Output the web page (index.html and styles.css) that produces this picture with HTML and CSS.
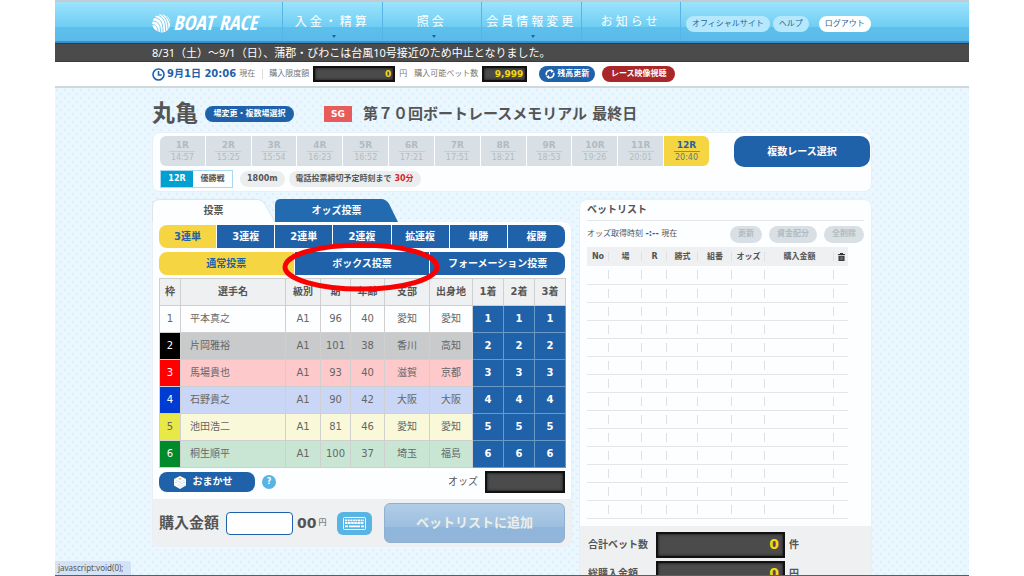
FILE: index.html
```html
<!DOCTYPE html>
<html lang="ja">
<head>
<meta charset="utf-8">
<meta name="viewport" content="width=device-width, initial-scale=1">
<title>BOAT RACE 投票</title>
<link rel="stylesheet" href="styles.css">
</head>
<body>
<div class="frame">
  <header class="header">
    <div class="wrap header-row">
      <a class="logo" href="#">
        <svg width="19" height="19" viewBox="0 0 19 19" aria-hidden="true">
          <path d="M1 6C3 1 8-1 13 1c5 2 6 7 5 11-2 6-8 8-13 5C1 15-1 11 1 6z" fill="#fff"/>
          <g fill="none" stroke="#6cc9f0" stroke-width=".9">
            <path d="M2 3.500C9 4 11 9 11 18"/><path d="M5 1C12 3 14 9 13.500 17"/><path d="M9 .3c5 3 7 8 7 14.700"/><path d="M0 7c6 0 9 4 8.500 11.500"/><path d="M0 10.500c4 0 6 3 6 7"/><path d="M12.500.5c3 3 5 6 6 10"/>
          </g>
        </svg>
        <span>BOAT RACE</span>
      </a>
      <nav class="nav">
        <a class="has-menu" href="#">入金・精算</a>
        <a class="has-menu" href="#">照会</a>
        <a class="has-menu" href="#">会員情報変更</a>
        <a href="#">お知らせ</a>
      </nav>
      <div class="links">
        <a class="chip" href="#">オフィシャルサイト</a>
        <a class="chip" href="#">ヘルプ</a>
        <button class="chip chip-out" type="button">ログアウト</button>
      </div>
    </div>
  </header>
  <div class="notice"><p class="wrap">8/31（土）～9/1（日）、蒲郡・びわこは台風10号接近のため中止となりました。</p></div>
  <div class="status">
    <div class="wrap status-row">
      <svg class="clock" width="13" height="13" viewBox="0 0 13 13" aria-hidden="true"><g fill="none" stroke="#1f62a9" stroke-width="1.600"><circle cx="6.500" cy="6.500" r="5.500"/><path d="M6.500 3v4h3.200"/></g></svg>
      <strong class="now">9月1日 20:06</strong><span class="now-tail">現在</span>
      <span class="limit-label">購入限度額</span><output class="lcd lcd-limit">0</output>
      <span class="yen">円</span><span class="count-label">購入可能ベット数</span><output class="lcd lcd-count">9,999</output>
      <button class="pill refresh" type="button"><svg width="10" height="10" viewBox="0 0 10 10" aria-hidden="true"><g fill="none" stroke="#fff" stroke-width="1.600"><path d="M1.500 6.200A3.600 3.600 0 0 1 6.800 1.900M8.500 3.800A3.600 3.600 0 0 1 3.200 8.100"/></g><path d="M6 0l3 2.500-3 1.300zM4 10L1 7.500l3-1.300z" fill="#fff"/></svg>残高更新</button>
      <button class="pill video" type="button">レース映像視聴</button>
    </div>
  </div>

  <main class="wrap main">
    <div class="title-row">
      <h1>丸亀</h1>
      <button class="pill venue" type="button">場変更・複数場選択</button>
      <span class="grade">SG</span>
      <h2>第７０回ボートレースメモリアル 最終日</h2>
    </div>

    <section class="card races">
      <div class="race-row">
        <div class="race-list">
          <button type="button" disabled><b>1R</b><span>14:57</span></button>
          <button type="button" disabled><b>2R</b><span>15:25</span></button>
          <button type="button" disabled><b>3R</b><span>15:54</span></button>
          <button type="button" disabled><b>4R</b><span>16:23</span></button>
          <button type="button" disabled><b>5R</b><span>16:52</span></button>
          <button type="button" disabled><b>6R</b><span>17:21</span></button>
          <button type="button" disabled><b>7R</b><span>17:51</span></button>
          <button type="button" disabled><b>8R</b><span>18:21</span></button>
          <button type="button" disabled><b>9R</b><span>18:53</span></button>
          <button type="button" disabled><b>10R</b><span>19:26</span></button>
          <button type="button" disabled><b>11R</b><span>20:01</span></button>
          <button type="button" class="current"><b>12R</b><span>20:40</span></button>
        </div>
        <button class="multi" type="button">複数レース選択</button>
      </div>
      <div class="race-info">
        <div class="race-name"><b>12R</b><span>優勝戦</span></div>
        <span class="tag">1800m</span>
        <span class="tag">電話投票締切予定時刻まで <em>30分</em></span>
      </div>
    </section>

    <div class="columns">
      <section class="vote">
        <div class="tabs">
          <button class="tab-on" type="button"><svg viewBox="0 0 123 24" preserveAspectRatio="none" aria-hidden="true"><path d="M.5 24V8q0-7.500 7.500-7.500H106q4 0 7 5L123 24" fill="#fdfeff" stroke="#dde3e6"/></svg><span>投票</span></button>
          <button class="tab-off" type="button"><svg viewBox="0 0 123 24" preserveAspectRatio="none" aria-hidden="true"><path d="M0 24V6q0-6 6-6H106q5 0 8 5l9 19z" fill="#236bb1"/></svg><span>オッズ投票</span></button>
        </div>
        <div class="vote-body">
          <div class="segment types">
            <button class="on" type="button">3連単</button><button type="button">3連複</button><button type="button">2連単</button><button type="button">2連複</button><button type="button">拡連複</button><button type="button">単勝</button><button type="button">複勝</button>
          </div>
          <div class="segment methods">
            <button class="on" type="button">通常投票</button><button type="button">ボックス投票</button><button type="button">フォーメーション投票</button>
          </div>
          <table class="entries">
            <colgroup><col class="c-no"><col class="c-name"><col class="c-class"><col class="c-term"><col class="c-age"><col class="c-branch"><col class="c-home"><col class="c-pick"><col class="c-pick"><col class="c-pick"></colgroup>
            <thead><tr><th>枠</th><th>選手名</th><th>級別</th><th>期</th><th>年齢</th><th>支部</th><th>出身地</th><th>1着</th><th>2着</th><th>3着</th></tr></thead>
            <tbody>
              <tr class="boat1"><td>1</td><td>平本真之</td><td>A1</td><td>96</td><td>40</td><td>愛知</td><td>愛知</td><td><button type="button">1</button></td><td><button type="button">1</button></td><td><button type="button">1</button></td></tr>
              <tr class="boat2"><td>2</td><td>片岡雅裕</td><td>A1</td><td>101</td><td>38</td><td>香川</td><td>高知</td><td><button type="button">2</button></td><td><button type="button">2</button></td><td><button type="button">2</button></td></tr>
              <tr class="boat3"><td>3</td><td>馬場貴也</td><td>A1</td><td>93</td><td>40</td><td>滋賀</td><td>京都</td><td><button type="button">3</button></td><td><button type="button">3</button></td><td><button type="button">3</button></td></tr>
              <tr class="boat4"><td>4</td><td>石野貴之</td><td>A1</td><td>90</td><td>42</td><td>大阪</td><td>大阪</td><td><button type="button">4</button></td><td><button type="button">4</button></td><td><button type="button">4</button></td></tr>
              <tr class="boat5"><td>5</td><td>池田浩二</td><td>A1</td><td>81</td><td>46</td><td>愛知</td><td>愛知</td><td><button type="button">5</button></td><td><button type="button">5</button></td><td><button type="button">5</button></td></tr>
              <tr class="boat6"><td>6</td><td>桐生順平</td><td>A1</td><td>100</td><td>37</td><td>埼玉</td><td>福島</td><td><button type="button">6</button></td><td><button type="button">6</button></td><td><button type="button">6</button></td></tr>
            </tbody>
          </table>
          <div class="auto-row">
            <button class="auto" type="button"><svg width="12" height="13" viewBox="0 0 12 13" aria-hidden="true"><path d="M6 0l6 3v6.500L6 13 0 9.500V3z" fill="#fff"/><path d="M.5 3.500L6 6l5.500-2.500M6 6v6.500" fill="none" stroke="#c9dbea" stroke-width=".7"/><ellipse cx="6" cy="2.800" rx="1.500" ry=".9" fill="#e8b93c"/><g fill="#8fb3d6"><circle cx="2" cy="6.500" r=".6"/><circle cx="4" cy="9" r=".6"/><circle cx="8" cy="7.500" r=".6"/><circle cx="10" cy="6.500" r=".6"/><circle cx="8" cy="10" r=".6"/><circle cx="10" cy="9" r=".6"/></g></svg>おまかせ</button>
            <button class="help" type="button">?</button>
            <span class="odds-label">オッズ</span><output class="lcd lcd-odds" aria-label="オッズ"></output>
          </div>
        </div>
        <div class="vote-foot">
          <label for="amount">購入金額</label>
          <input id="amount" type="text">
          <b class="zeros">00</b><span class="unit">円</span>
          <button class="keys" type="button" aria-label="キーボード"><svg width="23" height="13" viewBox="0 0 23 13" aria-hidden="true"><rect x=".5" y=".5" width="22" height="12" rx="1" fill="#58b4e2" stroke="#fff"/><g stroke="#fff" stroke-width="1.800" fill="none"><path d="M2 3.300h19" stroke-dasharray="2 .6"/><path d="M2 6h19" stroke-dasharray="2.500 .6"/><path d="M2 9.300h3M6 9.300h11M18 9.300h3"/></g></svg></button>
          <button class="add" type="button">ベットリストに追加</button>
        </div>
        <svg class="marker" viewBox="0 0 158 50" aria-hidden="true"><ellipse cx="79" cy="25" rx="76" ry="22" fill="none" stroke="#fb0000" stroke-width="5"/></svg>
      </section>

      <section class="bets">
        <div class="bets-body">
          <h3>ベットリスト</h3>
          <div class="bets-tools">
            <span class="odds-time">オッズ取得時刻 <b>-:--</b> 現在</span>
            <button type="button" disabled>更新</button>
            <button type="button" disabled>資金配分</button>
            <button type="button" disabled>全削除</button>
          </div>
          <table class="slips">
            <colgroup><col class="s-no"><col class="s-venue"><col class="s-race"><col class="s-type"><col class="s-combo"><col class="s-odds"><col class="s-amount"><col class="s-del"></colgroup>
            <thead><tr><th>No</th><th>場</th><th>R</th><th>勝式</th><th>組番</th><th>オッズ</th><th>購入金額</th><th><svg width="7" height="8" viewBox="0 0 7 8" aria-label="削除"><path d="M0 1h2V0h3v1h2v1H0zM.5 2.700h6V8h-6z" fill="#333"/><path d="M2.200 3.500v3.700M3.500 3.500v3.700M4.800 3.500v3.700" stroke="#aaa" stroke-width=".5"/></svg></th></tr></thead>
            <tbody>
              <tr><td></td><td></td><td></td><td></td><td></td><td></td><td></td><td></td></tr>
              <tr><td></td><td></td><td></td><td></td><td></td><td></td><td></td><td></td></tr>
              <tr><td></td><td></td><td></td><td></td><td></td><td></td><td></td><td></td></tr>
              <tr><td></td><td></td><td></td><td></td><td></td><td></td><td></td><td></td></tr>
              <tr><td></td><td></td><td></td><td></td><td></td><td></td><td></td><td></td></tr>
              <tr><td></td><td></td><td></td><td></td><td></td><td></td><td></td><td></td></tr>
              <tr><td></td><td></td><td></td><td></td><td></td><td></td><td></td><td></td></tr>
              <tr><td></td><td></td><td></td><td></td><td></td><td></td><td></td><td></td></tr>
              <tr><td></td><td></td><td></td><td></td><td></td><td></td><td></td><td></td></tr>
              <tr><td></td><td></td><td></td><td></td><td></td><td></td><td></td><td></td></tr>
              <tr><td></td><td></td><td></td><td></td><td></td><td></td><td></td><td></td></tr>
              <tr><td></td><td></td><td></td><td></td><td></td><td></td><td></td><td></td></tr>
              <tr><td></td><td></td><td></td><td></td><td></td><td></td><td></td><td></td></tr>
              <tr><td></td><td></td><td></td><td></td><td></td><td></td><td></td><td></td></tr>
            </tbody>
          </table>
        </div>
        <div class="totals">
          <span>合計ベット数</span><output class="lcd lcd-total">0</output><span>件</span>
          <span>総購入金額</span><output class="lcd lcd-total">0</output><span>円</span>
        </div>
      </section>
    </div>
  </main>
  <div class="hint">javascript:void(0);</div>
</div>
</body>
</html>
```
FILE: styles.css
```css
* { box-sizing: border-box; }
body, h1, h2, h3, p { margin: 0; }
body {
  font-family: "DejaVu Sans", "Noto Sans CJK JP", sans-serif;
  font-size: 10px;
  line-height: 1.2;
  color: #555;
  background: #fff;
}
button, input { font: inherit; color: inherit; }
button { border: 0; padding: 0; margin: 0; background: none; cursor: pointer; white-space: nowrap; }
a { color: inherit; text-decoration: none; }
svg { display: block; flex: none; }
.frame {
  position: relative;
  height: 100vh;
  margin: 0 55px;
  overflow: hidden;
  border-bottom: 1px solid #2c6b9e;
  background-color: #eaf7ff;
  background-image:
    radial-gradient(circle at 2px 2px, #d9effb 1px, transparent 1px),
    radial-gradient(circle at 6px 6px, #d9effb 1px, transparent 1px);
  background-size: 8px 8px;
}
.wrap { width: 100%; max-width: 720px; margin: 0 auto; }

.header {
  border-top: 2px solid #c3cbd0;
  border-bottom: 2px solid #3590cf;
  background: linear-gradient(#9ce3fc, #6fcdf3 64%, #5dc0ec 65%, #5bb9e8);
}
.header-row { display: flex; height: 39px; }
.logo { flex: none; display: flex; align-items: center; gap: 2px; width: 130px; padding-top: 3px; color: #fff; font: italic bold 20px/20px "Liberation Sans Narrow", "Open Sans Condensed", "Liberation Sans", sans-serif; white-space: nowrap; }
.nav { flex: none; display: flex; width: 399px; border-left: 1px solid #58b3e6; }
.nav a {
  position: relative;
  flex: 1;
  display: flex;
  align-items: center;
  justify-content: center;
  padding-top: 2px;
  border-right: 1px solid #58b3e6;
  color: #fff;
  font-size: 12px;
  letter-spacing: 3px;
}
.has-menu::after { content: ""; position: absolute; bottom: 3px; left: 50%; border: 2px solid transparent; border-top: 3px solid #1f62a9; border-bottom: 0; }
.links { display: flex; align-items: center; gap: 3px; padding: 4px 0 0 5px; }
.chip { height: 16px; padding: 0 6px; border-radius: 8px; background: #b5e8fc; color: #2a6496; font-size: 8px; line-height: 16px; white-space: nowrap; }
.chip-out { margin-left: 7px; background: #fff; }

.notice { border-top: 1px solid #3a3a3a; border-bottom: 1px solid #3a3a3a; background: #4b4b4b; color: #fff; font: 11px/17px "Noto Sans", "Noto Sans CJK JP", sans-serif; }
.status { border-bottom: 2px solid #cfd9dc; background: #fff; }
.status-row { display: flex; align-items: center; height: 24px; font-size: 8px; color: #777; white-space: nowrap; }
.now { margin-left: 2px; color: #1f62a9; font-size: 10px; }
.now-tail { margin-left: 3px; padding-right: 7px; border-right: 1px solid #ddd; }
.limit-label { margin: 0 4px 0 6px; }
.lcd { display: flex; align-items: center; justify-content: flex-end; border: 2px solid #111; background: #4b4b4b; box-shadow: inset 0 0 3px #111; color: #f5d90f; font-weight: bold; }
.lcd-limit { width: 82px; height: 16px; padding-right: 2px; font-size: 9px; }
.yen { margin: 0 7px 0 4px; }
.lcd-count { width: 45px; height: 16px; margin-left: 4px; padding-right: 2px; font-size: 9px; }
.pill { display: flex; align-items: center; justify-content: center; height: 16px; border-radius: 8px; background: #1f62a9; color: #fff; font-size: 8px; font-weight: bold; }
.refresh { gap: 2px; width: 56px; margin-left: 12px; }
.video { width: 73px; margin-left: 7px; background: #a92629; }

.title-row { display: flex; align-items: center; height: 44px; padding-top: 7px; white-space: nowrap; }
h1 { font-size: 23px; }
.venue { width: 89px; margin-left: 7px; }
.grade { width: 28px; margin: 0 11px 0 30px; background: #e75b5b; color: #fff; font-size: 9px; font-weight: bold; line-height: 16px; text-align: center; }
h2 { font-size: 15px; }

.card, .bets, .vote-body, .vote-foot { border: 1px solid #e9f0f3; }
.card { border-radius: 8px; background: #fdfeff; }
.races { padding: 3px 1px 3px 7px; }
.race-row { display: flex; justify-content: space-between; }
.race-list { display: flex; width: 549px; height: 30px; gap: 1px; border-radius: 6px; overflow: hidden; }
.race-list button { flex: 1; padding: 2px 0; background: #d8e0e5; color: #b2bbc0; font-size: 8px; line-height: 11px; }
.race-list b, .race-list span { display: block; width: 26px; margin: 0 auto; }
.race-list b { border-bottom: 1px solid #c4cdd2; font-size: 9px; line-height: 12px; }
.race-list .current { background: #f6d543; color: #1f62a9; }
.race-list .current b { border-color: #88906b; }
.race-list .current span { color: #5e7b77; }
.multi { width: 136px; height: 31px; border-radius: 10px; background: #1f62a9; color: #fff; font-weight: bold; }
.race-info { display: flex; align-items: center; gap: 4px; margin-top: 3px; font-size: 8px; font-weight: bold; }
.race-name { display: flex; width: 73px; height: 18px; margin-right: 3px; border: 1px solid #a9d8f3; line-height: 16px; text-align: center; }
.race-name b { width: 32px; background: #00a0d0; color: #fff; }
.race-name span { flex: 1; }
.tag { height: 16px; padding: 0 7px; border-radius: 8px; background: #ebeeef; line-height: 16px; white-space: nowrap; }
.tag em { color: #d4262b; font-style: normal; }

.columns { display: flex; align-items: flex-start; gap: 7px; margin-top: 7px; }
.vote { position: relative; width: 420px; }
.tabs { display: flex; gap: 0; height: 23px; }
.tabs button { position: relative; width: 123px; height: 23px; font-weight: bold; }
.tabs svg { position: absolute; inset: 0; width: 100%; height: 100%; }
.tabs span { position: relative; }
.tab-off { color: #fff; }
.vote-body { padding: 3px 6px 6px; border-width: 0 1px; border-radius: 0 8px 0 0; background: #fdfeff; }
.segment { display: flex; gap: 1px; height: 23px; border-radius: 8px; overflow: hidden; }
.segment button { flex: 1; background: #1f62a9; color: #fff; font-weight: bold; }
.segment .on { background: #f6d543; color: #1f62a9; }
.methods { margin-top: 4px; }

table { border-collapse: collapse; table-layout: fixed; }
th, td { padding: 0; text-align: center; }
.entries { width: 100%; margin-top: 3px; }
.entries th, .entries td { height: 27px; border: 1px solid #cfcfcf; }
.entries td { color: #666; }
.entries th { background: #eff0f2; font-weight: bold; }
.entries td:nth-child(2) { padding-left: 9px; text-align: left; }
.c-no { width: 21px; } .c-name { width: 105px; } .c-class { width: 35px; } .c-term { width: 30px; } .c-age { width: 34px; } .c-branch { width: 45px; } .c-home { width: 43px; } .c-pick { width: 31px; }
.entries td:nth-child(n+8) { border-color: #6c9ac6; background: #1f62a9; }
.entries td button { width: 100%; height: 26px; color: #fff; font-weight: bold; }
.boat2 { background: #c9cacb; } .boat3 { background: #fdc9cb; } .boat4 { background: #c9d6f5; } .boat5 { background: #f9f9d9; } .boat6 { background: #c9e6d5; }
.boat2 td:first-child { background: #000; color: #fff; }
.boat3 td:first-child { background: #f00; color: #fff; }
.boat4 td:first-child { background: #003cd2; color: #fff; }
.boat5 td:first-child { background: #e8e846; }
.boat6 td:first-child { background: #008a2c; color: #fff; }

.auto-row { display: flex; align-items: center; margin-top: 3px; }
.auto { display: flex; align-items: center; justify-content: center; gap: 7px; width: 96px; height: 20px; padding-right: 8px; border-radius: 8px; background: #1f62a9; color: #fff; font-weight: bold; }
.help { width: 14px; height: 14px; margin-left: 7px; border-radius: 50%; background: #58b4e2; color: #fff; font-size: 8px; font-weight: bold; line-height: 14px; }
.odds-label { margin: 0 7px 0 auto; }
.lcd-odds { width: 80px; height: 22px; }
.vote-foot { display: flex; align-items: center; height: 48px; padding: 0 6px; border-radius: 0 0 8px 8px; background: #eff0f2; }
.vote-foot label { font-size: 15px; font-weight: bold; white-space: nowrap; }
.vote-foot input { width: 67px; height: 23px; margin-left: 7px; border: 1px solid #1f62a9; border-radius: 4px; background: #fff; }
.zeros { margin-left: 4px; font-size: 14px; }
.unit { margin-left: 2px; font-size: 8px; }
.keys { display: flex; align-items: center; justify-content: center; width: 35px; height: 23px; margin-left: 10px; border-radius: 6px; background: #58b4e2; }
.add { width: 181px; height: 40px; margin-left: auto; border: 1px solid #8fb0d0; border-radius: 6px; background: linear-gradient(#b0cde8, #9dbfdf 60%, #8fb6db 61%, #93b5d9); color: #eeeee8; font-size: 13px; font-weight: bold; }
.marker { position: absolute; top: 43px; left: 130px; width: 158px; height: 50px; pointer-events: none; }

.bets { flex: 1; border-radius: 8px 8px 0 0; background: #fdfeff; overflow: hidden; }
.bets-body { padding: 0 7px 7px; }
h3 { border-bottom: 1px solid #e3e6e8; font-size: 10px; line-height: 20px; }
.bets-tools { display: flex; align-items: center; gap: 7px; height: 26px; font-size: 8px; }
.odds-time { margin-right: auto; white-space: nowrap; }
.odds-time b { color: #1f62a9; }
.bets-tools button { padding: 0 8px; height: 17px; border-radius: 9px; background: #d8e0e5; color: #b2bbc0; font-weight: bold; }
.slips { width: 261px; }
.s-no { width: 22px; } .s-venue { width: 33px; } .s-race { width: 25px; } .s-type { width: 31px; } .s-combo { width: 34px; } .s-odds { width: 33px; } .s-amount { width: 69px; } .s-del { width: 14px; }
.slips thead { background: #eff0f2; }
.slips th { height: 19px; font-size: 8px; white-space: nowrap; }
.slips td { height: 18px; }
.slips th svg { margin: 0 auto; }
.slips tbody tr { border-bottom: 1px solid #e3e6e8; }
.slips td:not(:last-child), .slips th:not(:last-child) { background: linear-gradient(#dee0e2, #dee0e2) right center / 1px 9px no-repeat; }
.totals { display: grid; grid-template-columns: 60px 129px 1fr; align-items: center; gap: 3px 8px; padding: 6px 8px; background: #eff0f2; font-weight: bold; }
.totals .lcd { height: 26px; padding-right: 4px; font-size: 14px; }
.totals span { white-space: nowrap; }
.totals span:nth-child(3n) { margin-left: -4px; }
.hint { position: absolute; left: 0; bottom: 0; padding: 0 7px 0 3px; background: #d3e3f7; border-top-right-radius: 2px; color: #555; font: 8px/14px "Noto Sans", sans-serif; }
```
